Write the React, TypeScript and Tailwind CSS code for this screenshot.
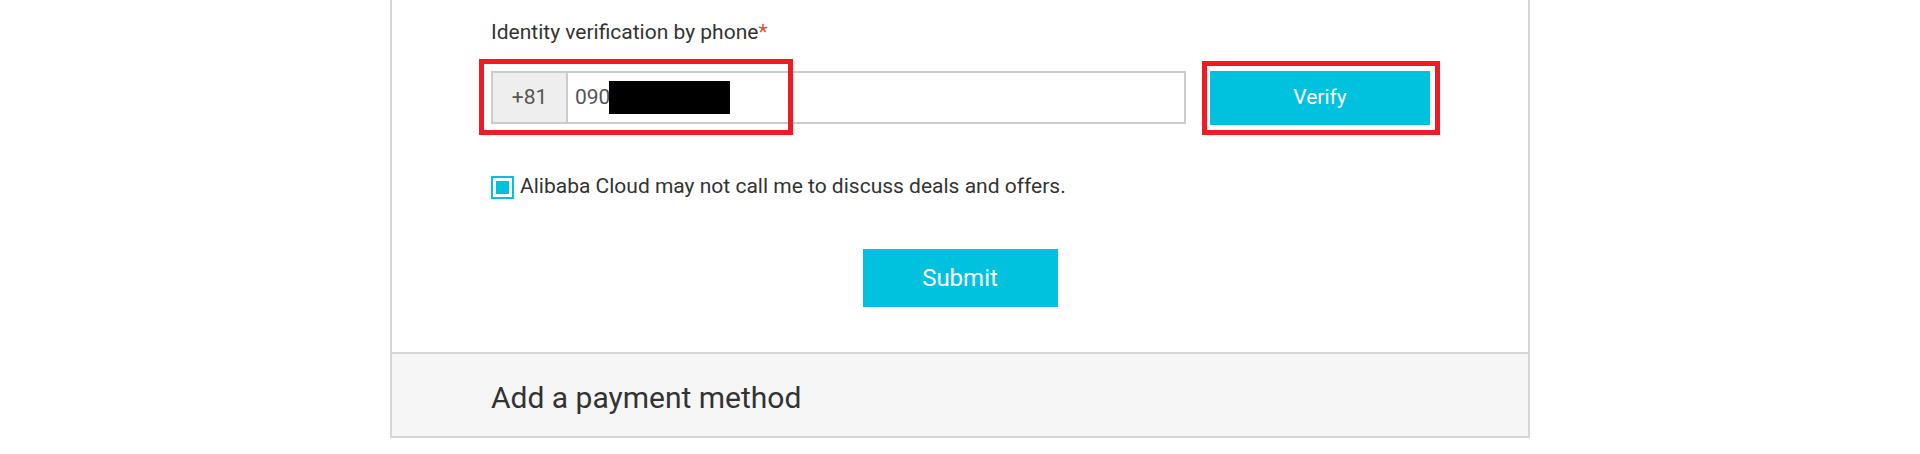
import React from "react";

export default function App() {
  return (
    <div
      className="w-[1920px] h-[454px] bg-white overflow-hidden"
      style={{ fontFamily: "Roboto, 'Liberation Sans', sans-serif" }}
    >
      <div className="mx-auto w-[1140px] border-x-2 border-b-2 border-[#d6d6d6] bg-white">
        <div className="pl-[99px] pr-[98px] pt-[20px] pb-[45px]">
          <div className="text-[21px] leading-[24px] text-[#333]">
            Identity verification by phone<span className="text-[#f5442b]">*</span>
          </div>
          <div className="mt-[27px] flex items-start gap-[24px]">
            <div className="relative flex h-[53px] w-[695px] border-2 border-[#cccccc] bg-white">
              <div className="flex w-[75px] items-center justify-center border-r-2 border-[#cccccc] bg-[#eeeeee] text-[21px] text-[#555]">
                +81
              </div>
              <div className="flex items-center pl-[7px] text-[21px] text-[#555]">
                <span>090</span>
                <span className="ml-[-1px] inline-block h-[33px] w-[121px] bg-black" />
              </div>
              <div className="pointer-events-none absolute left-[-14px] top-[-14px] h-[76px] w-[314px] border-[5px] border-[#ed1c24]" />
            </div>
            <div className="relative">
              <button className="flex h-[54px] w-[220px] items-center justify-center bg-[#00c1de] text-[21px] text-white">
                Verify
              </button>
              <div className="pointer-events-none absolute left-[-8px] top-[-10px] h-[74px] w-[238px] border-[5px] border-[#ed1c24]" />
            </div>
          </div>
          <div className="mt-[49px] flex items-start gap-[6px]">
            <div className="mt-[2px] flex h-[23px] w-[23px] items-center justify-center border-2 border-[#00c1de] bg-white">
              <div className="h-[13px] w-[13px] bg-[#00c1de]" />
            </div>
            <span className="text-[21px] leading-[24px] text-[#333]">
              Alibaba Cloud may not call me to discuss deals and offers.
            </span>
          </div>
          <div className="mt-[50px] flex justify-center pr-[1px]">
            <button className="flex h-[58px] w-[195px] items-center justify-center bg-[#00c1de] text-[24px] text-white">
              Submit
            </button>
          </div>
        </div>
        <div className="border-t-2 border-[#d6d6d6] bg-[#f6f6f6] pl-[99px] pt-[26px] pb-[20px]">
          <div className="text-[30px] leading-[36px] text-[#333]">Add a payment method</div>
        </div>
      </div>
    </div>
  );
}
